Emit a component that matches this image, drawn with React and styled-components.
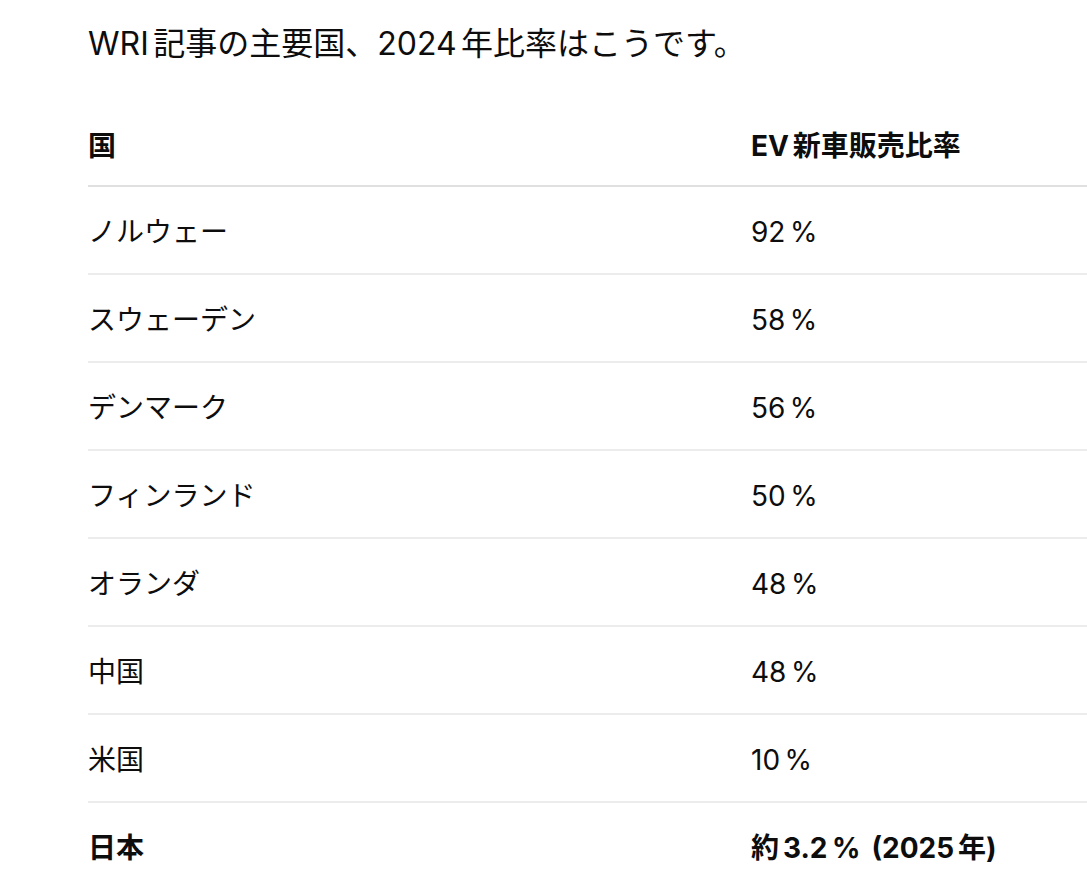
import React from "react";
import styled, { createGlobalStyle } from "styled-components";

const Global = createGlobalStyle`
  html, body {
    margin: 0;
    padding: 0;
    background: #ffffff;
    overflow: hidden;
  }
  body {
    font-family: Inter, "Noto Sans CJK JP", sans-serif;
    color: #0d0d0d;
    text-autospace: no-autospace;
  }
`;

const Page = styled.main`
  width: 1087px;
  height: 895px;
  padding: 20px 0 0 88px;
  box-sizing: border-box;
  overflow: hidden;
`;

const Lead = styled.p`
  margin: 0 0 31px 0;
  font-size: 32px;
  line-height: 48px;
  font-weight: 400;
`;

const Sp = styled.span`
  display: inline-block;
  width: ${(p) => p.$w || 0.14}em;
`;

const Table = styled.table`
  width: 999px;
  border-collapse: collapse;
  font-size: 28px;
  line-height: 42px;
`;

const HeadCell = styled.th`
  text-align: left;
  font-weight: 700;
  padding: 26px 0 18px;
  width: ${(p) => p.$w || "auto"};
  border-bottom: 2px solid #e0e0e0;
`;

const Row = styled.tr`
  border-bottom: 2px solid ${(p) => (p.$last ? "transparent" : "#ececec")};
`;

const Cell = styled.td`
  padding: 24px 0 20px;
  font-weight: ${(p) => (p.$bold ? 700 : 400)};
`;

const rows = [
  ["ノルウェー", "92"],
  ["スウェーデン", "58"],
  ["デンマーク", "56"],
  ["フィンランド", "50"],
  ["オランダ", "48"],
  ["中国", "48"],
  ["米国", "10"],
];

export default function App() {
  return (
    <>
      <Global />
      <Page>
        <Lead>
          WRI<Sp />記事の主要国、2024<Sp />年比率はこうです。
        </Lead>
        <Table>
          <thead>
            <tr>
              <HeadCell $w="663px">国</HeadCell>
              <HeadCell>
                EV<Sp />新車販売比率
              </HeadCell>
            </tr>
          </thead>
          <tbody>
            {rows.map(([c, v]) => (
              <Row key={c}>
                <Cell>{c}</Cell>
                <Cell>
                  {v}
                  <Sp $w={0.16} />%
                </Cell>
              </Row>
            ))}
            <Row $last>
              <Cell $bold>日本</Cell>
              <Cell $bold>
                約<Sp />3.2<Sp $w={0.16} />%<Sp $w={0.4} />(2025<Sp />年)
              </Cell>
            </Row>
          </tbody>
        </Table>
      </Page>
    </>
  );
}
